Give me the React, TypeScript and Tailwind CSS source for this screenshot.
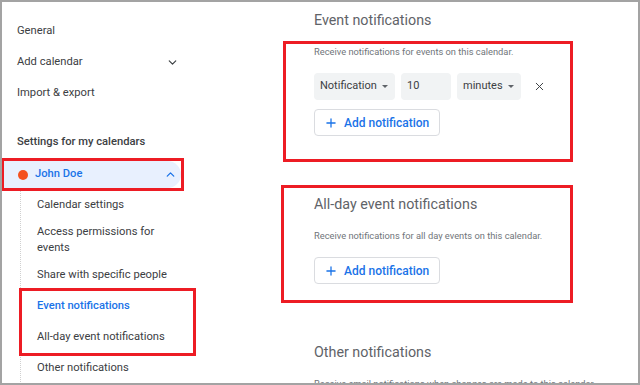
import React from "react";
import { ChevronDown, ChevronUp, Plus, X } from "lucide-react";

const font = { fontFamily: "Roboto, 'Liberation Sans', sans-serif" };

function SubItem({ label, active }: { label: string; active?: boolean }) {
    return (
        <div
            className={
                "h-[31px] flex items-center text-[11.2px] " +
                (active ? "text-[#1a73e8] font-medium" : "text-[#3c4043]")
            }
        >
            {label}
        </div>
    );
}

function Select({ label, w }: { label: string; w: string }) {
    return (
        <div className={"h-[27px] bg-[#f1f3f4] rounded-[4px] flex items-center justify-between pl-[6px] pr-[7px] text-[11px] text-[#3c4043] " + w}>
            <span>{label}</span>
            <span className="w-0 h-0 border-l-[3px] border-r-[3px] border-t-[3px] border-l-transparent border-r-transparent border-t-[#5f6368]" />
        </div>
    );
}

function AddButton() {
    return (
        <button className="h-[27px] w-[126px] border border-[#dadce0] rounded-[4px] flex items-center pl-[9px] gap-[6px] text-[12px] font-medium text-[#1a73e8]">
            <Plus className="w-[14px] h-[14px]" strokeWidth={2.2} />
            Add notification
        </button>
    );
}

export default function App() {
    return (
        <div
            className="w-[640px] h-[385px] overflow-hidden bg-white border-2 border-[#a3a3a3] flex"
            style={font}
        >
            {/* sidebar */}
            <div className="w-[279px] shrink-0 flex flex-col overflow-hidden">
                <div className="shrink-0 pt-[14px] pl-[15px] pr-[102px] text-[11.2px] text-[#3c4043]">
                    <div className="h-[31px] flex items-center">General</div>
                    <div className="h-[31px] flex items-center justify-between">
                        Add calendar
                        <ChevronDown className="w-[13px] h-[13px] text-[#3c4043]" strokeWidth={2.2} />
                    </div>
                    <div className="h-[31px] flex items-center">Import &amp; export</div>
                </div>
                <div className="shrink-0 pl-[15px] mt-[18px] h-[31px] flex items-center text-[11.2px] font-medium text-[#3c4043]">
                    Settings for my calendars
                </div>
                <div className="shrink-0 w-[183px] h-[33px] -ml-[1px] border-[3px] border-[#ed1c24] flex">
                    <div className="flex-1 bg-[#e8f0fe] rounded-r-[14px] flex items-center pl-[14px] pr-[4px]">
                        <span className="w-[10px] h-[10px] rounded-full bg-[#f4511e]" />
                        <span className="ml-[7px] text-[11.2px] font-medium text-[#1a73e8] flex-1">John Doe</span>
                        <ChevronUp className="w-[13px] h-[13px] text-[#1a73e8]" strokeWidth={2.4} />
                    </div>
                </div>
                <div className="shrink-0 ml-[18px] border-l border-dotted border-[#d0d0d0] flex flex-col">
                    <div className="pl-[16px] h-[29px] flex items-center text-[11.2px] text-[#3c4043]">Calendar settings</div>
                    <div className="pl-[16px] py-[4px] text-[11.2px] leading-[16px] text-[#3c4043]">
                        Access permissions for
                        <br />
                        events
                    </div>
                    <div className="pl-[16px]"><SubItem label="Share with specific people" /></div>
                    <div className="-ml-[2px] w-[177px] border-[3px] border-[#ed1c24] pl-[15px] -my-[3px] relative">
                        <SubItem label="Event notifications" active />
                        <SubItem label="All-day event notifications" />
                    </div>
                    <div className="pl-[16px]"><SubItem label="Other notifications" /></div>
                </div>
            </div>

            {/* main */}
            <div className="flex-1 flex flex-col overflow-hidden">
                <div className="shrink-0 pl-[33px] h-[39px] pt-[8px] text-[14.3px] text-[#5f6368]">Event notifications</div>
                <div className="shrink-0 ml-[2px] w-[290px] h-[121px] border-[3px] border-[#ed1c24] pl-[28px] pt-[1px]">
                    <div className="text-[9.3px] text-[#70757a] h-[14px] flex items-center">
                        Receive notifications for events on this calendar.
                    </div>
                    <div className="mt-[14px] flex items-center gap-[6px]">
                        <Select label="Notification" w="w-[81px]" />
                        <div className="h-[27px] w-[50px] bg-[#f1f3f4] rounded-[4px] flex items-center pl-[6px] text-[11px] text-[#3c4043]">10</div>
                        <Select label="minutes" w="w-[64px]" />
                        <X className="ml-[6px] w-[13px] h-[13px] text-[#3c4043]" strokeWidth={1.8} />
                    </div>
                    <div className="mt-[9px]">
                        <AddButton />
                    </div>
                </div>
                <div className="shrink-0 mt-[23px] w-[292px] h-[118px] border-[3px] border-[#ed1c24] pl-[30px] pt-[8px]">
                    <div className="text-[14.3px] text-[#5f6368] h-[18px] flex items-center">All-day event notifications</div>
                    <div className="mt-[15px] text-[9.3px] text-[#70757a] h-[14px] flex items-center">
                        Receive notifications for all day events on this calendar.
                    </div>
                    <div className="mt-[14px]">
                        <AddButton />
                    </div>
                </div>
                <div className="shrink-0 pl-[33px] mt-[41px] text-[14.3px] text-[#5f6368] h-[18px] flex items-center">Other notifications</div>
                <div className="shrink-0 pl-[33px] mt-[15px] text-[9.3px] text-[#70757a] whitespace-nowrap">
                    Receive email notifications when changes are made to this calendar.
                </div>
            </div>
        </div>
    );
}
